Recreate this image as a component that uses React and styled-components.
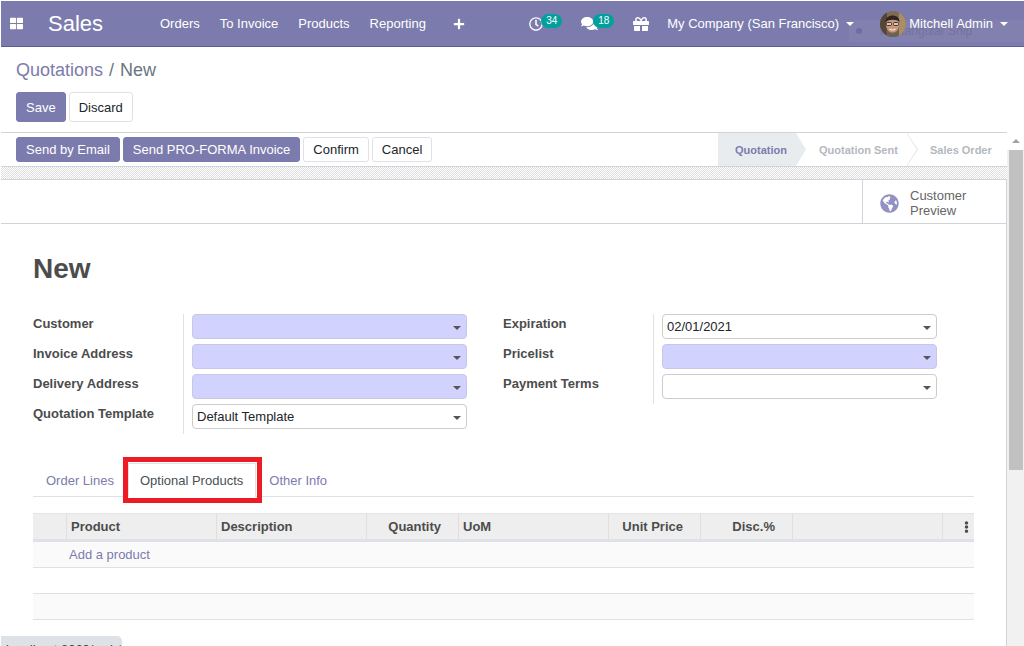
import React from "react";
import styled, { createGlobalStyle } from "styled-components";
import { FaThLarge, FaPlus, FaRegClock, FaComments, FaGift, FaGlobeAmericas, FaEllipsisV } from "react-icons/fa";

const Global = createGlobalStyle`
  html, body { margin: 0; padding: 0; overflow: hidden; background: #fff; }
  #root { width: 1024px; height: 646px; overflow: hidden; }
  * { box-sizing: border-box; }
`;

const Page = styled.div`
  position: relative;
  width: 1024px;
  height: 646px;
  padding: 1px 0 0 1px;
  overflow: hidden;
  font-family: "Liberation Sans", Arial, sans-serif;
  font-size: 13px;
  color: #212529;
  background: #fff;
`;

const Nav = styled.header`
  position: relative;
  display: flex;
  align-items: center;
  height: 46px;
  padding: 0 16px 0 9px;
  background: #7c7bad;
  border-bottom: 1px solid #5f5e97;
  color: #fff;
`;
const AppsIcon = styled(FaThLarge)`
  width: 13px;
  height: 13px;
`;
const Brand = styled.span`
  margin-left: 25px;
  width: 112px;
  font-size: 22px;
  line-height: 1;
`;
const Menu = styled.nav`
  display: flex;
  align-items: center;
  gap: 20px;
`;
const MenuItem = styled.span`
  font-size: 13px;
`;
const PlusIcon = styled(FaPlus)`
  width: 12px;
  height: 12px;
  margin-left: 7px;
`;
const Systray = styled.div`
  display: flex;
  align-items: center;
  margin-left: auto;
  position: relative;
  z-index: 1;
`;
const TrayIcon = styled.span`
  position: relative;
  display: flex;
  align-items: center;
  margin-right: ${(p) => p.$mr}px;
  svg { width: ${(p) => p.$size || 14}px; height: ${(p) => p.$size || 14}px; }
`;
const Badge = styled.span`
  position: absolute;
  left: 12px;
  top: calc(50% - 10px);
  width: 21px;
  height: 14px;
  border-radius: 7px;
  background: #00a09d;
  color: #fff;
  font-size: 10px;
  line-height: 13px;
  text-align: center;
`;
const Caret = styled.span`
  display: inline-block;
  margin-left: ${(p) => p.$ml ?? 7}px;
  border-top: 4px solid ${(p) => p.$color || "#fff"};
  border-left: 4px solid transparent;
  border-right: 4px solid transparent;
`;
const Company = styled.span`
  display: flex;
  align-items: center;
  margin-right: 26px;
`;
const AvatarWrap = styled.svg`
  width: 26px;
  height: 26px;
  margin-right: 3px;
  border-radius: 50%;
`;
const User = styled.span`
  display: flex;
  align-items: center;
`;
const Ghost = styled.div`
  position: absolute;
  right: 0;
  top: 19px;
  width: 175px;
  height: 22px;
  display: flex;
  align-items: center;
  padding-left: 7px;
  background: #8180ae;
  color: #74739f;
  font-size: 12px;
`;
const GhostDot = styled.span`
  width: 6px;
  height: 6px;
  border-radius: 50%;
  background: #6e6da3;
  margin-right: 18px;
`;

const ControlPanel = styled.section`
  height: 85px;
  padding: 13px 15px 0;
`;
const Crumbs = styled.div`
  font-size: 18px;
  line-height: 20px;
  color: #6c757d;
`;
const CrumbLink = styled.span`
  color: #7c7bad;
`;
const CrumbSep = styled.span`
  margin: 0 6px;
`;
const Buttons = styled.div`
  display: flex;
  gap: 3px;
  margin-top: ${(p) => p.$mt ?? 0}px;
`;
const Button = styled.span`
  display: inline-flex;
  align-items: center;
  height: ${(p) => p.$h || 25}px;
  padding: 0 9px;
  border-radius: 3px;
  border: 1px solid ${(p) => (p.$primary ? "#7c7bad" : "#dee2e6")};
  background: ${(p) => (p.$primary ? "#7c7bad" : "#fff")};
  color: ${(p) => (p.$primary ? "#fff" : "#212529")};
  font-size: 13px;
`;

const Main = styled.div`
  display: flex;
  height: 514px;
`;
const Content = styled.main`
  width: 1006px;
  flex: none;
`;
const StatusRow = styled.div`
  display: flex;
  justify-content: space-between;
  height: 35px;
  border-top: 1px solid #ced4da;
  border-bottom: 1px solid #ced4da;
  padding-left: 15px;
`;
const Pipeline = styled.div`
  display: flex;
  height: 100%;
`;
const Stage = styled.div`
  position: relative;
  display: flex;
  align-items: center;
  width: ${(p) => p.$w}px;
  padding-left: ${(p) => p.$pl}px;
  font-size: 11px;
  font-weight: 700;
  color: ${(p) => (p.$active ? "#7c7bad" : "#b4b8be")};
  background: ${(p) => (p.$active ? "#e9ecef" : "transparent")};
  &::after {
    content: "";
    display: ${(p) => (p.$last ? "none" : "block")};
    position: absolute;
    z-index: 1;
    top: 0;
    bottom: 0;
    right: -10px;
    width: 10px;
    background: ${(p) => (p.$active ? "#e9ecef" : "#fff")};
    clip-path: polygon(0 0, 100% 50%, 0 100%);
  }
  &::before {
    content: "";
    display: ${(p) => (p.$last || p.$active ? "none" : "block")};
    position: absolute;
    z-index: 2;
    top: 0;
    bottom: 0;
    right: -11px;
    width: 11px;
    background: #dee2e6;
    clip-path: polygon(0 0, 100% 50%, 0 100%, 0 97%, 90% 50%, 0 3%);
  }
`;
const Checker = styled.div`
  height: 13px;
  border-bottom: 1px solid #ced4da;
  background-color: #fff;
  background-image: repeating-conic-gradient(#dedede 0 25%, #ffffff 0 50%);
  background-size: 2px 2px;
`;
const Sheet = styled.div`
  height: 466px;
  border-right: 1px solid #ced4da;
  background: #fff;
`;
const ButtonBox = styled.div`
  display: flex;
  justify-content: flex-end;
  height: 44px;
  border-bottom: 1px solid #ced4da;
`;
const StatButton = styled.div`
  display: flex;
  align-items: center;
  width: 144px;
  padding-left: 17px;
  border-left: 1px solid #ced4da;
  color: #666;
  font-size: 13px;
  line-height: 15px;
`;
const StatText = styled.span`
  display: flex;
  flex-direction: column;
  margin-top: 3px;
`;
const GlobeIcon = styled(FaGlobeAmericas)`
  width: 19px;
  height: 19px;
  margin: 4px 11px 0 0;
  color: #9390c3;
  flex: none;
`;
const SheetBody = styled.div`
  padding: 0 32px;
`;
const Title = styled.h1`
  margin: 27px 0 0;
  font-size: 28px;
  line-height: 36px;
  font-weight: 700;
  color: #4c4c4c;
`;
const FormGrid = styled.div`
  display: flex;
  gap: 36px;
  margin-top: 27px;
`;
const Group = styled.div`
  display: flex;
  align-items: flex-start;
`;
const Labels = styled.div`
  width: 150px;
`;
const Label = styled.div`
  height: 30px;
  line-height: 19px;
  font-weight: 700;
  font-size: 13px;
  color: #4c4c4c;
`;
const Fields = styled.div`
  width: 284px;
  padding-left: 8px;
  border-left: 1px solid #dee2e6;
`;
const FieldRow = styled.div`
  height: 30px;
`;
const Field = styled.div`
  display: flex;
  align-items: center;
  justify-content: space-between;
  width: 275px;
  height: 25px;
  padding: 0 5px 0 4px;
  border: 1px solid ${(p) => (p.$required ? "#c8c8e6" : "#ccc")};
  border-radius: 4px;
  background: ${(p) => (p.$required ? "#d2d2ff" : "#fff")};
  color: #212529;
  font-size: 13px;
`;
const FieldCaret = styled(Caret)`
  margin-top: 2px;
`;
const Tabs = styled.div`
  display: flex;
  height: 37px;
  margin-top: 26px;
  padding-top: 3px;
  border-bottom: 1px solid #dee2e6;
  color: #7c7bad;
`;
const Tab = styled.div`
  display: flex;
  align-items: center;
  height: 34px;
  padding: 0 13px;
  margin-right: ${(p) => p.$mr ?? 0}px;
  color: #7c7bad;
`;
const ActiveTab = styled.div`
  position: relative;
  display: flex;
  align-items: center;
  height: 34px;
  padding: 0 12px 0 11px;
  color: #495057;
  background: #fff;
  border: 1px solid #dee2e6;
  border-bottom: 0;
`;
const Highlight = styled.span`
  position: absolute;
  left: -6px;
  right: -7px;
  top: -7px;
  bottom: -6px;
  border: 5px solid #ed1c24;
  pointer-events: none;
`;
const Table = styled.div`
  margin-top: 16px;
`;
const columns = "34px 150px 150px 92px 150px 92px 92px 150px 31px";
const HeadRow = styled.div`
  display: grid;
  grid-template-columns: ${columns};
  height: 29px;
  border-top: 1px solid #e4e4e4;
  border-bottom: 3px solid #dee2e6;
  background: #eee;
`;
const HeadCell = styled.div`
  display: flex;
  align-items: center;
  justify-content: ${(p) => (p.$right ? "flex-end" : "flex-start")};
  padding: 0 ${(p) => (p.$right ? 17 : 3)}px 0 4px;
  border-right: ${(p) => (p.$last ? "0" : "1px solid #dfdfdf")};
  font-weight: 700;
  color: #4c4c4c;
`;
const MoreIcon = styled(FaEllipsisV)`
  width: 12px;
  height: 12px;
  margin-left: 15px;
  color: #4c4c4c;
`;
const Row = styled.div`
  display: flex;
  align-items: center;
  height: 26px;
  padding-left: 36px;
  border-bottom: 1px solid #e0e0e0;
  background: ${(p) => (p.$odd ? "#fbfafb" : "#fff")};
  color: #7c7bad;
`;
const Scrollbar = styled.aside`
  width: 17px;
  flex: none;
  display: flex;
  flex-direction: column;
  background: #f1f1f1;
`;
const ScrollArrow = styled.div`
  height: 18px;
  display: flex;
  align-items: center;
  justify-content: center;
  background: #fff;
  &::before {
    content: "";
    border-bottom: 4px solid #a3a3a3;
    border-left: 4px solid transparent;
    border-right: 4px solid transparent;
  }
`;
const ScrollThumb = styled.div`
  height: 320px;
  margin: 0 1px 0 2px;
  background: #c1c1c1;
`;
const LinkTip = styled.div`
  position: absolute;
  left: 1px;
  top: 636px;
  width: 121px;
  height: 14px;
  padding: 6px 0 0 5px;
  border-radius: 0 5px 0 0;
  background: #dee2e6;
  color: #3c4043;
  font-size: 13px;
  line-height: 15px;
  white-space: nowrap;
  overflow: hidden;
`;

const Avatar = () => (
  <AvatarWrap viewBox="0 0 26 26">
    <rect width="26" height="26" fill="#7f6a52" />
    <rect x="0" y="0" width="7" height="26" fill="#55463a" />
    <rect x="19" y="0" width="7" height="26" fill="#a88d66" />
    <ellipse cx="12.5" cy="13.5" rx="6.5" ry="8" fill="#c9987c" />
    <path d="M5.5 11 C5 3 19.5 2 19.5 11 C17 8 9 8 5.5 11Z" fill="#2e2420" />
    <rect x="6.5" y="11.5" width="5" height="3" rx="1" fill="#e3c3ad" stroke="#33292a" strokeWidth="0.9" />
    <rect x="13.5" y="11.5" width="5" height="3" rx="1" fill="#e3c3ad" stroke="#33292a" strokeWidth="0.9" />
    <path d="M9.5 18 Q12.5 20 15.5 18" stroke="#f3ece6" strokeWidth="1.2" fill="none" />
    <path d="M6 18 Q8 23 12.5 22.5 Q17 23 19 18 L19 26 L6 26Z" fill="#6d5546" opacity="0.55" />
    <path d="M4 26 Q13 22 22 26Z" fill="#4e6a70" />
  </AvatarWrap>
);

const heads = [
  ["", false], ["Product", false], ["Description", false], ["Quantity", true], ["UoM", false],
  ["Unit Price", true], ["Disc.%", true], ["", false],
];

export default function App() {
  return (
    <Page>
      <Global />
      <Nav>
        <Ghost><GhostDot />Rectangular Ship</Ghost>
        <AppsIcon />
        <Brand>Sales</Brand>
        <Menu>
          <MenuItem>Orders</MenuItem>
          <MenuItem>To Invoice</MenuItem>
          <MenuItem>Products</MenuItem>
          <MenuItem>Reporting</MenuItem>
          <PlusIcon />
        </Menu>
        <Systray>
          <TrayIcon $mr={38}><FaRegClock /><Badge>34</Badge></TrayIcon>
          <TrayIcon $mr={35} $size={17}><FaComments /><Badge>18</Badge></TrayIcon>
          <TrayIcon $mr={18} $size={16}><FaGift /></TrayIcon>
          <Company>My Company (San Francisco)<Caret /></Company>
          <Avatar />
          <User>Mitchell Admin<Caret /></User>
        </Systray>
      </Nav>
      <ControlPanel>
        <Crumbs><CrumbLink>Quotations</CrumbLink><CrumbSep>/</CrumbSep>New</Crumbs>
        <Buttons $mt={12}>
          <Button $primary $h={30}>Save</Button>
          <Button $h={30}>Discard</Button>
        </Buttons>
      </ControlPanel>
      <Main>
        <Content>
          <StatusRow>
            <Buttons $mt={4}>
              <Button $primary>Send by Email</Button>
              <Button $primary>Send PRO-FORMA Invoice</Button>
              <Button>Confirm</Button>
              <Button>Cancel</Button>
            </Buttons>
            <Pipeline>
              <Stage $active $w={78} $pl={17}>Quotation</Stage>
              <Stage $w={111} $pl={23}>Quotation Sent</Stage>
              <Stage $last $w={100} $pl={23}>Sales Order</Stage>
            </Pipeline>
          </StatusRow>
          <Checker />
          <Sheet>
            <ButtonBox>
              <StatButton>
                <GlobeIcon />
                <StatText>
                  <span>Customer</span>
                  <span>Preview</span>
                </StatText>
              </StatButton>
            </ButtonBox>
            <SheetBody>
              <Title>New</Title>
              <FormGrid>
                <Group>
                  <Labels>
                    <Label>Customer</Label>
                    <Label>Invoice Address</Label>
                    <Label>Delivery Address</Label>
                    <Label>Quotation Template</Label>
                  </Labels>
                  <Fields>
                    <FieldRow><Field $required><span /><FieldCaret $ml={0} $color="#555" /></Field></FieldRow>
                    <FieldRow><Field $required><span /><FieldCaret $ml={0} $color="#555" /></Field></FieldRow>
                    <FieldRow><Field $required><span /><FieldCaret $ml={0} $color="#555" /></Field></FieldRow>
                    <FieldRow><Field>Default Template<FieldCaret $ml={0} $color="#555" /></Field></FieldRow>
                  </Fields>
                </Group>
                <Group>
                  <Labels>
                    <Label>Expiration</Label>
                    <Label>Pricelist</Label>
                    <Label>Payment Terms</Label>
                  </Labels>
                  <Fields>
                    <FieldRow><Field>02/01/2021<FieldCaret $ml={0} $color="#555" /></Field></FieldRow>
                    <FieldRow><Field $required><span /><FieldCaret $ml={0} $color="#555" /></Field></FieldRow>
                    <FieldRow><Field><span /><FieldCaret $ml={0} $color="#555" /></Field></FieldRow>
                  </Fields>
                </Group>
              </FormGrid>
              <Tabs>
                <Tab $mr={1}>Order Lines</Tab>
                <ActiveTab>Optional Products<Highlight /></ActiveTab>
                <Tab>Other Info</Tab>
              </Tabs>
              <Table>
                <HeadRow>
                  {heads.map(([text, right], i) => (
                    <HeadCell key={i} $right={right}>{text}</HeadCell>
                  ))}
                  <HeadCell $last><MoreIcon /></HeadCell>
                </HeadRow>
                <Row $odd>Add a product</Row>
                <Row />
                <Row $odd />
              </Table>
            </SheetBody>
          </Sheet>
        </Content>
        <Scrollbar>
          <ScrollArrow />
          <ScrollThumb />
        </Scrollbar>
      </Main>
      <LinkTip>localhost:8069/web#</LinkTip>
    </Page>
  );
}
